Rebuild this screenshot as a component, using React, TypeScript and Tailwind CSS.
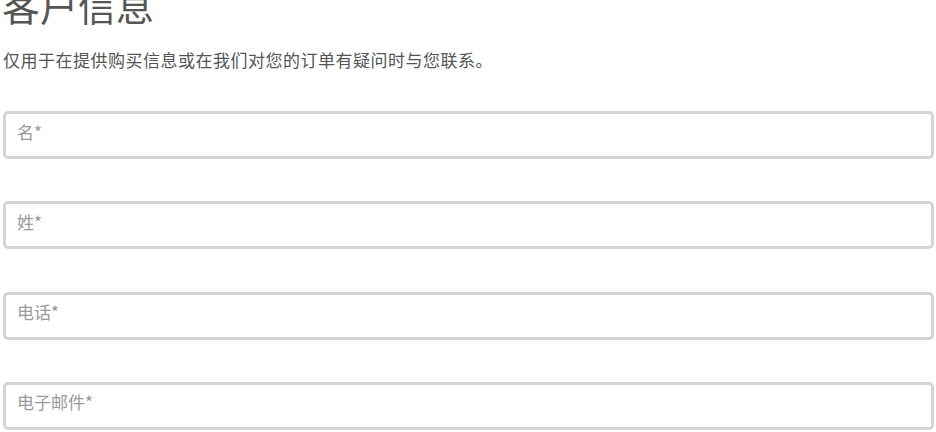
const fields = ['名*', '姓*', '电话*', '电子邮件*'];

export default function App() {
  return (
    <div
      className="w-[936px] h-[432px] overflow-hidden bg-white text-[#555]"
      style={{ fontFamily: '"Noto Sans CJK SC", "Noto Sans", sans-serif' }}
    >
      <h1 className="mt-[-14px] pl-[2px] text-[38px] leading-[38px] font-normal text-[#555]">客户信息</h1>
      <p className="mt-[24px] pl-[3px] text-[17px] leading-[24px] tracking-[0.5px] text-[#555]">
        仅用于在提供购买信息或在我们对您的订单有疑问时与您联系。
      </p>
      <div className="mt-[39px] flex flex-col gap-[42.3px] px-[3px]">
        {fields.map((f) => (
          <input
            key={f}
            placeholder={f}
            className="h-[48px] w-[931px] rounded-[5px] border-[3px] border-[#d4d4d4] bg-white px-[11px] pt-0 pb-[8px] text-[17px] text-[#555] placeholder:text-[#999] outline-none"
          />
        ))}
      </div>
    </div>
  );
}
